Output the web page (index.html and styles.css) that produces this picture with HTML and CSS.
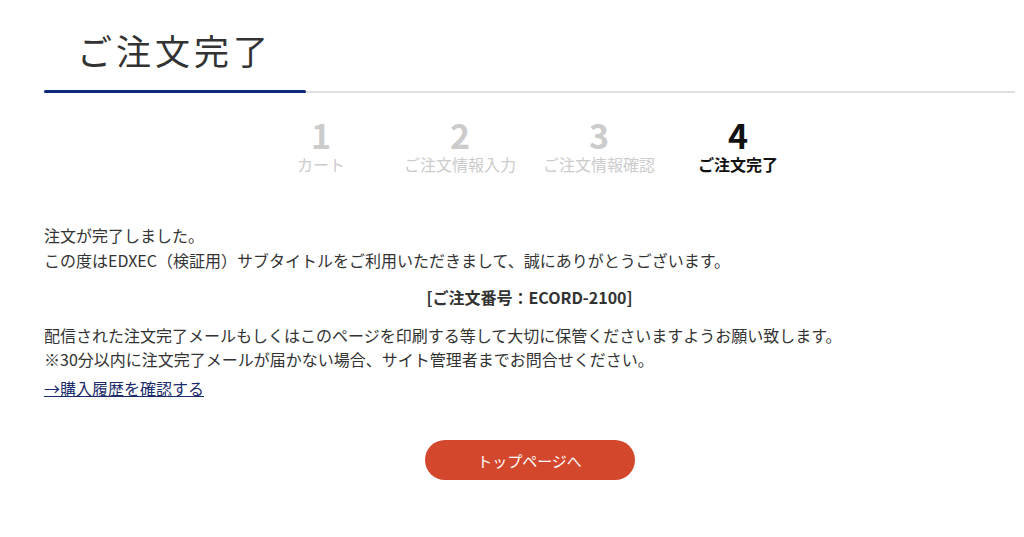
FILE: index.html
```html
<!DOCTYPE html>
<html lang="ja">
<head>
    <meta charset="UTF-8">
    <meta name="viewport" content="width=device-width, initial-scale=1.0">
    <title>ご注文完了</title>
    <link rel="stylesheet" href="styles.css">
</head>
<body>
    <div class="page">
        <div class="page-head">
            <h1 class="page-title">ご注文完了</h1>
            <div class="title-bar"><span class="title-bar-accent"></span></div>
        </div>

        <ol class="steps">
            <li class="step">
                <span class="step-num">1</span>
                <span class="step-label">カート</span>
            </li>
            <li class="step">
                <span class="step-num">2</span>
                <span class="step-label">ご注文情報入力</span>
            </li>
            <li class="step">
                <span class="step-num">3</span>
                <span class="step-label">ご注文情報確認</span>
            </li>
            <li class="step step-active">
                <span class="step-num">4</span>
                <span class="step-label">ご注文完了</span>
            </li>
        </ol>

        <div class="complete">
            <p class="message">注文が完了しました。<br>この度はEDXEC（検証用）サブタイトルをご利用いただきまして、誠にありがとうございます。</p>
            <p class="order-no">[ご注文番号：ECORD-2100]</p>
            <p class="message message-note">配信された注文完了メールもしくはこのページを印刷する等して大切に保管くださいますようお願い致します。<br>※30分以内に注文完了メールが届かない場合、サイト管理者までお問合せください。</p>
            <p class="history"><a href="#" class="history-link">→購入履歴を確認する</a></p>
        </div>

        <div class="actions">
            <button type="button" class="top-button">トップページへ</button>
        </div>
    </div>
</body>
</html>
```

FILE: styles.css
```css
body {
    margin: 0;
    font-family: "Noto Sans CJK JP", sans-serif;
    color: #333333;
    background-color: #FFFFFF;
}

.page {
    padding: 0 9px 40px 44px;
}

.page-head {
    padding-top: 24px;
}

.page-title {
    margin: 0;
    padding-left: 33px;
    font-size: 35px;
    font-weight: 400;
    letter-spacing: 4px;
    line-height: 52px;
    color: #333333;
}

.title-bar {
    position: relative;
    margin-top: 15px;
    height: 2px;
    background-color: #E0E0E0;
}

.title-bar-accent {
    position: absolute;
    left: 0;
    top: -1px;
    width: 262px;
    height: 3px;
    border-radius: 2px;
    background-color: #0E2A7A;
}

.steps {
    display: flex;
    justify-content: center;
    list-style: none;
    margin: 24px 0 0;
    padding: 0;
}

.step {
    display: flex;
    flex-direction: column;
    align-items: center;
    width: 139px;
    color: #CCCCCC;
}

.step-num {
    font-size: 34px;
    font-weight: 700;
    line-height: 36px;
}

.step-label {
    font-size: 16px;
    line-height: 22px;
}

.step-active {
    color: #111111;
}

.step-active .step-label {
    font-weight: 700;
}

.complete {
    margin-top: 48px;
    font-size: 16px;
    line-height: 25px;
}

.complete p {
    margin: 0;
}

.complete .order-no {
    margin-top: 12px;
    text-align: center;
    font-weight: 700;
}

.complete .message-note {
    margin-top: 13px;
    line-height: 24px;
}

.complete .history {
    margin-top: 5px;
}

.history-link {
    color: #1B2C6B;
    text-decoration: underline;
}

.actions {
    display: flex;
    justify-content: center;
    margin-top: 39px;
}

.top-button {
    width: 210px;
    height: 40px;
    border: none;
    border-radius: 20px;
    background-color: #D3472D;
    color: #FFFFFF;
    font-family: "Noto Sans CJK JP", sans-serif;
    font-size: 15px;
    cursor: pointer;
}
```
